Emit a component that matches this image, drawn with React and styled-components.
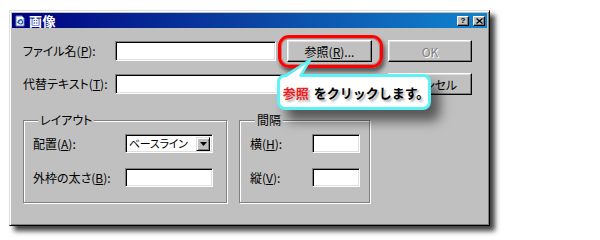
import React from 'react';
import styled, { createGlobalStyle } from 'styled-components';

const Global = createGlobalStyle`
  html, body { margin: 0; padding: 0; background: #fff; }
  body { font-family: "Noto Sans CJK JP", "Noto Sans", sans-serif; }
  #root { width: 600px; height: 240px; overflow: hidden; }
`;

const FONT = `"Noto Sans CJK JP", "Noto Sans", sans-serif`;

const Page = styled.div`
  width: 600px;
  height: 240px;
  box-sizing: border-box;
  padding: 10px 0 0 9px;
  background: #fff;
`;

const Window = styled.div`
  position: relative;
  width: 481px;
  height: 216px;
  box-sizing: border-box;
  background: #c0c0c0;
  border-style: solid;
  border-width: 1px;
  border-color: #dfdfdf #000 #000 #dfdfdf;
  box-shadow: inset 1px 1px 0 #fff, inset -1px -1px 0 #808080, 5px 5px 5px rgba(0, 0, 0, 0.75);
  padding: 2px;
  display: flex;
  flex-direction: column;
`;

const TitleBar = styled.div`
  height: 15px;
  display: flex;
  align-items: center;
  padding: 0 2px 0 2px;
  gap: 3px;
  background: linear-gradient(90deg, #000080 0%, #0b4aa6 55%, #1084d0 100%);
  color: #fff;
`;

const TitleText = styled.span`
  flex: 1;
  font-family: ${FONT};
  font-size: 13px;
  font-weight: 700;
  line-height: 15px;
  letter-spacing: 0.5px;
`;

const CapBtn = styled.div`
  box-sizing: border-box;
  width: 12px;
  height: 10px;
  display: flex;
  align-items: center;
  justify-content: center;
  background: #c0c0c0;
  border: 1px solid;
  border-color: #fff #000 #000 #fff;
  box-shadow: inset -1px -1px 0 #808080;
  color: #000;
  font-family: "Liberation Sans", sans-serif;
  font-size: 8px;
  font-weight: 700;
  line-height: 8px;
  margin-left: ${(p) => (p.$gap ? '1px' : '0')};
`;

const Body = styled.div`
  flex: 1;
  display: flex;
  flex-direction: column;
  padding: 12px 0 0 11px;
`;

const TopGrid = styled.div`
  display: grid;
  grid-template-columns: 92px 161px 96px 100px;
  grid-template-rows: 22px 22px;
  row-gap: 11px;
  align-items: center;
`;

const Label = styled.span`
  font-family: ${FONT};
  font-size: 12px;
  line-height: 16px;
  color: #000;
  white-space: nowrap;
  font-feature-settings: "palt";
  u {
    text-decoration: underline;
    text-underline-offset: 1px;
  }
`;

const Field = styled.div`
  box-sizing: border-box;
  width: ${(p) => (p.$w ? `${p.$w}px` : '100%')};
  height: ${(p) => p.$h || 20}px;
  background: #fff;
  border: 1px solid;
  border-color: #808080 #fff #fff #808080;
  box-shadow: inset 1px 1px 0 #000, inset -1px -1px 0 #dfdfdf;
  grid-column: ${(p) => p.$span || 'auto'};
  display: flex;
  align-items: center;
`;

const Button = styled.button`
  box-sizing: border-box;
  width: ${(p) => p.$w}px;
  height: 22px;
  padding: 0;
  justify-self: end;
  display: flex;
  align-items: center;
  justify-content: center;
  background: #c0c0c0;
  border: 1px solid;
  border-color: #fff #000 #000 #fff;
  box-shadow: inset -1px -1px 0 #808080, inset 1px 1px 0 #dfdfdf;
  font-family: ${FONT};
  font-size: 12px;
  font-feature-settings: "palt";
  color: ${(p) => (p.disabled ? '#808080' : '#000')};
  text-shadow: ${(p) => (p.disabled ? '1px 1px 0 #fff' : 'none')};
  u {
    text-decoration: underline;
    text-underline-offset: 1px;
  }
`;

const Groups = styled.div`
  display: flex;
  gap: 12px;
  margin-top: 25px;
`;

const Group = styled.div`
  box-sizing: border-box;
  width: ${(p) => p.$w}px;
  height: 83px;
  border: 1px solid #808080;
  box-shadow: 1px 1px 0 #fff, inset 1px 1px 0 #fff;
  display: flex;
  flex-direction: column;
  padding-left: ${(p) => p.$pl}px;
`;

const Caption = styled.span`
  align-self: flex-start;
  margin: -9px 0 0 ${(p) => p.$ml}px;
  padding: 0 2px;
  background: #c0c0c0;
  font-family: ${FONT};
  font-size: 12px;
  line-height: 16px;
  font-feature-settings: "palt";
  color: #000;
`;

const GroupGrid = styled.div`
  display: grid;
  grid-template-columns: ${(p) => p.$cols};
  grid-template-rows: 19px 19px;
  row-gap: 15px;
  align-items: center;
  margin-top: 6px;
`;

const SelectText = styled.span`
  flex: 1;
  padding-left: 3px;
  font-family: ${FONT};
  font-size: 11px;
  letter-spacing: -0.3px;
  font-feature-settings: "palt";
  line-height: 15px;
  color: #000;
  white-space: nowrap;
  overflow: hidden;
`;

const DropBtn = styled.div`
  box-sizing: border-box;
  flex: none;
  width: 14px;
  height: 14px;
  margin-right: 2px;
  display: flex;
  align-items: center;
  justify-content: center;
  background: #c0c0c0;
  border: 1px solid;
  border-color: #dfdfdf #000 #000 #dfdfdf;
  box-shadow: inset 1px 1px 0 #fff, inset -1px -1px 0 #808080;
`;

const Ring = styled.div`
  position: absolute;
  left: 268px;
  top: 24px;
  width: 105px;
  height: 33px;
  box-sizing: border-box;
  border: 3px solid #ff0000;
  border-radius: 11px;
  box-shadow: 2px 4px 4px rgba(0, 0, 0, 0.55), inset 0 0 0 1px rgba(150, 0, 0, 0.35);
  pointer-events: none;
`;

const Callout = styled.div`
  position: absolute;
  left: 267px;
  top: 63px;
  width: 154px;
  height: 36px;
  box-sizing: border-box;
  background: #fff;
  border: 3px solid #5cf2f6;
  border-radius: 8px;
  box-shadow: 9px 11px 12px rgba(0, 0, 0, 0.55);
  display: flex;
  align-items: center;
  justify-content: center;
  padding-left: 4px;
  font-family: ${FONT};
  font-size: 13px;
  font-weight: 700;
  color: #000;
  white-space: nowrap;
  text-shadow: 2px 2px 2px rgba(0, 0, 0, 0.35);
`;

const Red = styled.span`
  color: #f21c1c;
  margin-right: 5px;
`;

const Tail = styled.svg`
  position: absolute;
  left: 270px;
  top: 46px;
  width: 35px;
  height: 23px;
  overflow: visible;
`;

const DocIcon = () => (
  <svg width="12" height="12" viewBox="0 0 12 12">
    <path d="M2 1h6l2 2v8H2z" fill="#fff" stroke="#6a7fa8" strokeWidth="1" />
    <path d="M3 8c1-4 5-5 6-3-1-1-4 0-4 3z" fill="#2a6fd8" />
    <circle cx="6.5" cy="7" r="2" fill="none" stroke="#1c55c0" strokeWidth="1.2" />
  </svg>
);

export default function App() {
  return (
    <>
      <Global />
      <Page>
        <Window>
          <TitleBar>
            <DocIcon />
            <TitleText>画像</TitleText>
            <CapBtn>?</CapBtn>
            <CapBtn $gap>
              <svg width="7" height="6" viewBox="0 0 7 6">
                <path d="M0.5 0.5L6.5 5.5M6.5 0.5L0.5 5.5" stroke="#000" strokeWidth="1.3" />
              </svg>
            </CapBtn>
          </TitleBar>
          <Body>
            <TopGrid>
              <Label>ファイル名(<u>P</u>):</Label>
              <Field />
              <Button $w={85}>参照(<u>R</u>)...</Button>
              <Button $w={84} disabled>OK</Button>
              <Label>代替テキスト(<u>T</u>):</Label>
              <Field $span="2 / 4" />
              <Button $w={84}>キャンセル</Button>
            </TopGrid>
            <Groups>
              <Group $w={204} $pl={9}>
                <Caption $ml={5}>レイアウト</Caption>
                <GroupGrid $cols="92px 88px">
                  <Label>配置(<u>A</u>):</Label>
                  <Field $h={19}>
                    <SelectText>ベースライン</SelectText>
                    <DropBtn>
                      <svg width="7" height="4" viewBox="0 0 7 4">
                        <path d="M0 0h7L3.5 4z" fill="#000" />
                      </svg>
                    </DropBtn>
                  </Field>
                  <Label>外枠の太さ(<u>B</u>):</Label>
                  <Field $h={19} />
                </GroupGrid>
              </Group>
              <Group $w={131} $pl={10}>
                <Caption $ml={5}>間隔</Caption>
                <GroupGrid $cols="62px 48px">
                  <Label>横(<u>H</u>):</Label>
                  <Field $h={19} />
                  <Label>縦(<u>V</u>):</Label>
                  <Field $h={19} />
                </GroupGrid>
              </Group>
            </Groups>
          </Body>
          <Ring />
          <Callout>
            <Red>参照</Red>をクリックします。
          </Callout>
          <Tail viewBox="0 0 35 23">
            <path d="M4 22L30 3L20 22z" fill="#fff" />
            <path d="M4 19.5L30 3L20 19.5" fill="none" stroke="#5cf2f6" strokeWidth="2.5" strokeLinejoin="round" />
          </Tail>
        </Window>
      </Page>
    </>
  );
}
